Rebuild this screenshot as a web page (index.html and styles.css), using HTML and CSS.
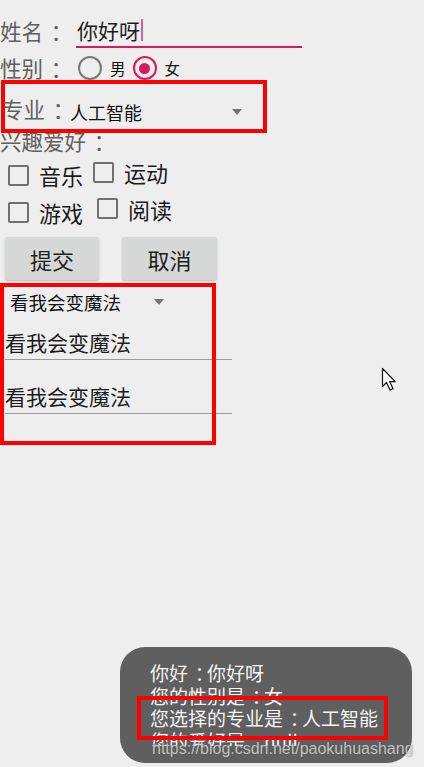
FILE: index.html
```html
<!DOCTYPE html>
<html lang="zh-CN">
  <head>
    <meta charset="UTF-8" />
    <meta name="viewport" content="width=device-width, initial-scale=1.0" />
    <title>个人信息</title>
    <link rel="stylesheet" href="styles.css">
  </head>
  <body>
    <div class="screen">
      <div class="row name-row">
        <span class="label name-label">姓名<span class="colon">：</span></span>
        <div class="edit name-edit">你好呀<span class="caret"></span></div>
      </div>

      <div class="row gender-row">
        <span class="label gender-label">性别<span class="colon">：</span></span>
        <span class="radio"></span>
        <span class="radio-text">男</span>
        <span class="radio checked"></span>
        <span class="radio-text">女</span>
      </div>

      <div class="row major-row">
        <span class="label major-label">专业<span class="colon">：</span></span>
        <div class="spinner major-spinner">
          <span>人工智能</span>
          <span class="arrow"></span>
        </div>
      </div>

      <div class="label hobby-title">兴趣爱好<span class="colon">：</span></div>

      <div class="check-row first">
        <label class="check"><span class="box"></span><span class="check-text">音乐</span></label>
        <label class="check raised"><span class="box"></span><span class="check-text">运动</span></label>
      </div>
      <div class="check-row second">
        <label class="check"><span class="box"></span><span class="check-text">游戏</span></label>
        <label class="check raised more"><span class="box"></span><span class="check-text">阅读</span></label>
      </div>

      <div class="btn-row">
        <button class="btn">提交</button>
        <button class="btn cancel">取消</button>
      </div>

      <div class="spinner magic-spinner">
        <span>看我会变魔法</span>
        <span class="arrow"></span>
      </div>
      <div class="edit magic-edit">看我会变魔法</div>
      <div class="edit magic-edit lower">看我会变魔法</div>

      <!-- annotation boxes drawn over the screenshot -->
      <div class="mark mark-major"></div>
      <div class="mark mark-magic"></div>

      <svg class="pointer" width="18" height="26" viewBox="0 0 18 26">
        <path d="M1.5 1.5 L1.5 19.5 L5.5 15.5 L9 23 L12 21.8 L8.6 14.6 L14.2 14.6 Z" fill="#fff" stroke="#111" stroke-width="1.2" stroke-linejoin="round" />
      </svg>

      <div class="toast">
        <div class="toast-text">
          <p>你好<span class="colon">：</span>你好呀</p>
          <p>您的性别是<span class="colon">：</span>女</p>
          <p>您选择的专业是<span class="colon">：</span>人工智能</p>
          <p>您的爱好是<span class="colon">：</span>null</p>
        </div>
      </div>
      <div class="mark mark-toast"></div>
      <div class="watermark">https://blog.csdn.net/paokuhuashang</div>
    </div>
  </body>
</html>
```

FILE: styles.css
```css
* {
  box-sizing: border-box;
}

body {
  margin: 0;
  padding: 0;
  background-color: #eeeeee;
  font-family: "Noto Sans CJK SC", "Noto Sans", sans-serif;
  color: #1c1c1c;
}

.screen {
  position: relative;
  width: 424px;
  height: 767px;
  overflow: hidden;
}

/* full-width colon sits in the middle of its cell, as on the device */
.colon {
  display: inline-block;
  padding-left: 0.36em;
  margin-right: -0.36em;
}

.row {
  display: flex;
  align-items: center;
}

.label {
  font-size: 21.5px;
  color: #5f5f5f;
  line-height: 1;
  white-space: nowrap;
}

/* name */
.name-row {
  margin-top: 14px;
  height: 34px;
}

.name-label {
  width: 76px;
}

.edit {
  display: flex;
  align-items: center;
  font-size: 21px;
  color: #1c1c1c;
}

.name-edit {
  width: 226px;
  height: 34px;
  padding-left: 1px;
  border-bottom: 2px solid #d81b60;
}

.caret {
  display: inline-block;
  width: 2px;
  height: 22px;
  margin-left: 1px;
  background-color: #ec5b8c;
}

/* gender */
.gender-row {
  height: 40px;
}

.gender-label {
  width: 78px;
}

.radio {
  width: 24px;
  height: 24px;
  border: 2.5px solid #787878;
  border-radius: 50%;
  display: flex;
  align-items: center;
  justify-content: center;
}

.radio.checked {
  margin-left: 7px;
  border-color: #d81b60;
}

.radio.checked::after {
  content: "";
  width: 11px;
  height: 11px;
  border-radius: 50%;
  background-color: #d81b60;
}

.radio-text {
  margin-left: 8px;
  font-size: 15.5px;
  color: #111;
}

/* major spinner */
.major-row {
  height: 42px;
}

.major-label {
  width: 70px;
  padding-left: 2px;
}

.spinner {
  display: flex;
  align-items: center;
  color: #111;
}

.major-spinner {
  width: 172px;
  padding-top: 6px;
  font-size: 18px;
}

.arrow {
  width: 0;
  height: 0;
  margin-left: auto;
  border-left: 5px solid transparent;
  border-right: 5px solid transparent;
  border-top: 6px solid #737373;
}

.hobby-title {
  height: 22px;
  line-height: 22px;
}

/* checkboxes */
.check-row {
  display: flex;
  align-items: center;
  padding-left: 8px;
}

.check-row.first {
  margin-top: 3px;
  height: 40px;
}

.check-row.second {
  height: 34px;
}

.check {
  display: flex;
  align-items: center;
}

.check.raised {
  margin-left: 10px;
  margin-bottom: 6px;
}

.check.raised.more {
  margin-left: 14px;
  margin-bottom: 7px;
}

.box {
  width: 21px;
  height: 21px;
  border: 2.5px solid #707070;
  border-radius: 2px;
}

.check-text {
  margin-left: 10px;
  font-size: 22px;
  color: #1a1a1a;
}

/* buttons */
.btn-row {
  display: flex;
  margin-top: 8px;
  padding-left: 5px;
}

.btn {
  width: 94px;
  height: 43px;
  padding: 0;
  border: none;
  border-radius: 3px;
  background-color: #d6d7d7;
  box-shadow: 0 1px 2px rgba(0, 0, 0, 0.22);
  font-family: inherit;
  font-size: 22px;
  color: #1e1e1e;
}

.btn.cancel {
  margin-left: 23px;
  width: 95px;
}

/* magic widgets */
.magic-spinner {
  margin-top: 8px;
  height: 28px;
  width: 164px;
  padding-left: 10px;
  font-size: 18.5px;
}

.magic-edit {
  margin-top: 9px;
  margin-left: 5px;
  width: 227px;
  height: 35px;
  border-bottom: 1.5px solid #9a9a9a;
}

.magic-edit.lower {
  margin-top: 18px;
  height: 36px;
}

/* overlays */
.mark {
  position: absolute;
  border: 4px solid #ff0000;
  z-index: 3;
}

.mark-major {
  left: 1px;
  top: 80px;
  width: 266px;
  height: 53px;
}

.mark-magic {
  left: 0;
  top: 283px;
  width: 216px;
  height: 162px;
}

.mark-toast {
  left: 137px;
  top: 696px;
  width: 251px;
  height: 44px;
}

.pointer {
  position: absolute;
  left: 381px;
  top: 367px;
}

.toast {
  position: absolute;
  left: 120px;
  top: 647px;
  width: 292px;
  height: 116px;
  border-radius: 25px;
  background-color: #5f5f5f;
  padding: 15px 0 0 30px;
  z-index: 2;
}

.toast-text {
  height: 84px;
  overflow: hidden;
  font-size: 19px;
  line-height: 22.5px;
  color: #f4f4f4;
}

.toast-text p {
  margin: 0;
  white-space: nowrap;
}

.watermark {
  position: absolute;
  left: 152px;
  top: 740px;
  font-family: "Liberation Sans", Arial, sans-serif;
  font-size: 16px;
  color: rgba(225, 225, 225, 0.8);
  text-shadow: 0 0 1px rgba(60, 60, 60, 0.6);
  z-index: 4;
}
```
